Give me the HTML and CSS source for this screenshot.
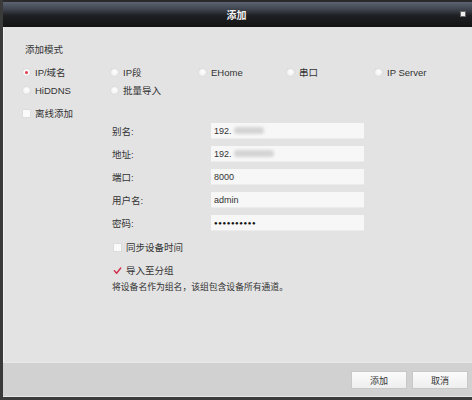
FILE: index.html
```html
<!DOCTYPE html>
<html>
<head>
<meta charset="utf-8">
<link rel="stylesheet" href="styles.css">
</head>
<body>
<div class="window">
  <div class="titlebar">
    <span class="title">添加</span>
    <span class="close"></span>
  </div>
  <div class="content">
    <div class="mode-label">添加模式</div>
    <div class="radio-grid">
      <label class="opt"><span class="radio on"></span>IP/域名</label>
      <label class="opt"><span class="radio"></span>IP段</label>
      <label class="opt"><span class="radio"></span>EHome</label>
      <label class="opt"><span class="radio"></span>串口</label>
      <label class="opt"><span class="radio"></span>IP Server</label>
      <label class="opt"><span class="radio"></span>HiDDNS</label>
      <label class="opt"><span class="radio"></span>批量导入</label>
    </div>
    <label class="opt offline"><span class="check"></span>离线添加</label>
    <div class="form">
      <div class="row"><span class="lbl">别名:</span><div class="input">192.<span class="blur b1"></span></div></div>
      <div class="row"><span class="lbl">地址:</span><div class="input">192.<span class="blur b2"></span></div></div>
      <div class="row"><span class="lbl">端口:</span><div class="input">8000</div></div>
      <div class="row"><span class="lbl">用户名:</span><div class="input">admin</div></div>
      <div class="row"><span class="lbl">密码:</span><div class="input pw">●●●●●●●●●●</div></div>
    </div>
    <div class="checks">
      <label class="opt"><span class="check"></span>同步设备时间</label>
      <label class="opt"><span class="check ticked"><svg viewBox="0 0 10 10" width="9" height="9"><path d="M1.5 5.4 L4 8 L8.6 2.2" fill="none" stroke="#d0304a" stroke-width="1.6" stroke-linecap="round" stroke-linejoin="round"/></svg></span>导入至分组</label>
    </div>
    <div class="note">将设备名作为组名，该组包含设备所有通道。</div>
  </div>
  <div class="footer">
    <button class="btn">添加</button>
    <button class="btn">取消</button>
  </div>
</div>
</body>
</html>
```

FILE: styles.css
```css
html, body {
  margin: 0;
  padding: 0;
  background: #cfcfcf;
}
body {
  width: 472px;
  height: 400px;
  overflow: hidden;
  font-family: "Liberation Sans", "Noto Sans CJK SC", sans-serif;
  font-size: 9px;
  color: #333;
}
.window {
  width: 476px;
  height: 400px;
  border-left: 3px solid #3a3a3a;
  border-bottom: 3px solid #3c3c3c;
  box-sizing: border-box;
  display: flex;
  flex-direction: column;
  background: #e3e3e3;
}
.titlebar {
  height: 27px;
  flex: none;
  box-sizing: border-box;
  border-top: 2px solid #2a2a2a;
  background: linear-gradient(#5c6472 0%, #3e434d 30%, #1e1f22 55%, #141414 100%);
  display: flex;
  align-items: center;
  justify-content: center;
  position: relative;
}
.title {
  color: #f4f4f4;
  font-size: 10px;
  font-weight: bold;
  margin-left: -6px;
}
.close {
  position: absolute;
  left: 458px;
  top: 10px;
  width: 4px;
  height: 4px;
  background: #f0f0f0;
  box-shadow: 0 0 0 1px #6a6a6a;
}
.content {
  flex: 1;
  padding: 16px 0 0 18px;
  border-left: 1px solid #f2f2f2;
}
.mode-label {
  height: 14px;
  line-height: 14px;
  font-size: 9.5px;
  padding-left: 3px;
}
.radio-grid {
  margin-top: 6px;
  display: grid;
  grid-template-columns: repeat(5, 88px);
  grid-auto-rows: 18px;
}
.opt {
  display: flex;
  align-items: center;
  height: 18px;
  font-size: 9.5px;
  white-space: nowrap;
}
.radio {
  width: 7px;
  height: 7px;
  border-radius: 50%;
  background: radial-gradient(circle at 50% 40%, #ffffff 0%, #f3f3f3 60%, #e0e0e0 100%);
  box-shadow: 0 0 0 0.5px #d6d6d6;
  margin: 0 5px 0 1px;
  position: relative;
  flex: none;
}
.radio.on::after {
  content: "";
  position: absolute;
  left: 2px;
  top: 2px;
  width: 3px;
  height: 3px;
  border-radius: 50%;
  background: #e23a4e;
}
.check {
  width: 7px;
  height: 7px;
  background: #fafafa;
  box-shadow: 0 0 0 0.5px #d6d6d6;
  margin: 0 5px 0 1px;
  flex: none;
  position: relative;
}
.check.ticked {
  background: transparent;
  box-shadow: none;
}
.check svg {
  position: absolute;
  left: -1px;
  top: -1px;
}
.offline {
  margin-top: 5px;
}
.form {
  margin: 1px 0 0 90px;
  display: flex;
  flex-direction: column;
  gap: 7px;
}
.row {
  display: flex;
  align-items: center;
  height: 16px;
}
.lbl {
  width: 99px;
  font-size: 9.5px;
}
.input {
  width: 153px;
  height: 16px;
  background: #f7f7f7;
  border-bottom: 1px solid #ececec;
  box-sizing: border-box;
  padding-left: 3px;
  line-height: 16px;
  font-size: 9px;
  color: #333;
  display: flex;
  align-items: center;
}
.input.pw {
  font-size: 6px;
  letter-spacing: 0.6px;
  color: #111;
}
.blur {
  display: inline-block;
  height: 7px;
  margin-left: 2px;
  background: #d4d4d4;
  border-radius: 4px;
  filter: blur(1.5px);
}
.b1 { width: 30px; }
.b2 { width: 40px; }
.checks {
  margin: 7px 0 0 91px;
  display: flex;
  flex-direction: column;
  gap: 5px;
}
.note {
  margin: 1px 0 0 90px;
  font-size: 8.8px;
  color: #333;
}
.footer {
  height: 35px;
  flex: none;
  box-sizing: border-box;
  background: #d1d1d1;
  border-top: 1px solid #e9e9e9;
  border-bottom: 1px solid #e6e6e6;
  display: flex;
  align-items: center;
  justify-content: flex-end;
  gap: 7px;
  padding: 0 9px 0 0;
}
.btn {
  width: 54px;
  height: 16px;
  margin-top: 1px;
  border: none;
  background: linear-gradient(#fbfbfb, #eeeeee);
  box-shadow: 0 0 0 1px #c8c8c8;
  font-family: "Liberation Sans", "Noto Sans CJK SC", sans-serif;
  font-size: 9px;
  color: #333;
  padding: 0;
}
```
